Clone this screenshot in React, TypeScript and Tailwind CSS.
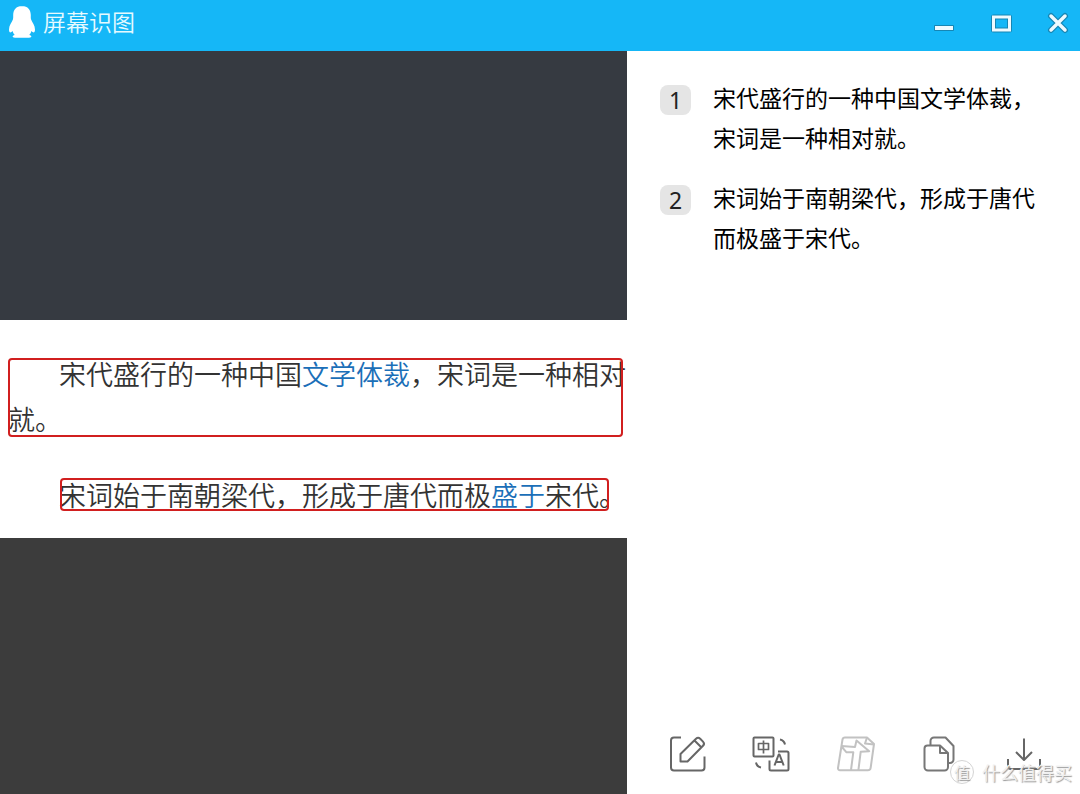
import React from "react";

const results = [
  { id: 1, lines: ["宋代盛行的一种中国文学体裁，", "宋词是一种相对就。"] },
  { id: 2, lines: ["宋词始于南朝梁代，形成于唐代", "而极盛于宋代。"] },
];

function PenguinLogo() {
  return (
    <svg viewBox="0 0 28 34" className="h-[34px] w-7 shrink-0" fill="#fff" aria-hidden="true">
      <path d="M14 1c-6 0-8.800 4.200-8.800 9 0 2 .1 3.200-.3 4.600C3.800 17.400 1 20.400 1 24.500c0 2 .6 2.900 1.300 2.900.8 0 1.600-.6 2.300-1.400.3 1.500 1.100 2.900 2.100 3.900-1.400.4-2.100 1-2.100 1.700 0 .9 1.600 1.200 4.300 1.200h10.200c2.700 0 4.300-.3 4.300-1.200 0-.7-.7-1.300-2.100-1.700 1-1 1.800-2.400 2.100-3.900.7.8 1.500 1.400 2.300 1.400.7 0 1.300-.9 1.300-2.900 0-4.100-2.800-7.100-3.900-9.900-.4-1.400-.3-2.600-.3-4.600 0-4.800-2.800-9-8.800-9z" />
    </svg>
  );
}

function WindowControls() {
  return (
    <div className="flex items-center gap-[33px]">
      <button type="button" aria-label="最小化" className="block">
        <svg viewBox="0 0 24 24" className="size-6" aria-hidden="true">
          <rect x="2" y="14" width="20" height="6" rx="1" fill="#1686b4" />
          <rect x="3" y="15" width="18" height="4" fill="#eefaff" />
        </svg>
      </button>
      <button type="button" aria-label="最大化" className="block">
        <svg viewBox="0 0 24 24" className="size-6" fill="none" aria-hidden="true">
          <rect x="4.500" y="6" width="16" height="13" stroke="#1686b4" strokeWidth="5" strokeLinejoin="round" />
          <rect x="4.500" y="6" width="16" height="13" stroke="#eefaff" strokeWidth="3" />
        </svg>
      </button>
      <button type="button" aria-label="关闭" className="block">
        <svg viewBox="0 0 24 24" className="size-6" fill="none" strokeLinecap="round" aria-hidden="true">
          <path d="M5 5l14 14M19 5l-14 14" stroke="#1686b4" strokeWidth="6" />
          <path d="M5 5l14 14M19 5l-14 14" stroke="#eefaff" strokeWidth="3.500" />
        </svg>
      </button>
    </div>
  );
}

const iconProps = {
  viewBox: "0 0 40 40",
  className: "size-10",
  fill: "none",
  strokeWidth: 2,
  strokeLinejoin: "round" as const,
  "aria-hidden": true,
};

function EditIcon() {
  return (
    <svg {...iconProps} stroke="#666">
      <path d="M14 3.500H7a3 3 0 0 0-3 3v27a3 3 0 0 0 3 3h27.500a3 3 0 0 0 3-3V22.500" />
      <path d="M13.500 27.500v-7.500L29 4.800a3 3 0 0 1 4.200 0l2.800 2.800a3 3 0 0 1 0 4.200L20.500 27.500zM27.500 6.500l7 7" />
    </svg>
  );
}

function TranslateIcon() {
  return (
    <svg {...iconProps} stroke="#666">
      <rect x="2.500" y="3.500" width="20" height="19" rx="1" />
      <path d="M7.500 9.500h10v6h-10zM12.500 6.500v13" strokeWidth="1.700" />
      <path d="M27 17.500h9a1.500 1.500 0 0 1 1.500 1.500v16a1.500 1.500 0 0 1-1.500 1.500H20a1.500 1.500 0 0 1-1.500-1.500v-8.500" />
      <path d="M23.500 31.500l4.200-11h.8l4.200 11M25 28h6.500M29 5.500c2.500.5 4.500 2.500 5 5M5 28.500c.5 2.500 2.300 4.500 5 5" />
    </svg>
  );
}

function MapIcon() {
  return (
    <svg {...iconProps} stroke="#c2c2c2">
      <path d="M9 3.500h22l7 6.500-3.300 23.500a3 3 0 0 1-3 2.800H4a2 2 0 0 1-2-2.300L6.500 5.500a2.500 2.500 0 0 1 2.500-2z" />
      <path d="M31 3.500l-2 6 9 1M5.500 12l13.500 1 1.500-6.500 12.700 10.700-8.500.5-2.300 18.500M5.500 12.500l5 5.800h6.800L15 36" />
    </svg>
  );
}

function CopyIcon() {
  return (
    <svg {...iconProps} stroke="#777">
      <path d="M10.500 11V7a3.500 3.500 0 0 1 3.500-3.500h11.500L33.500 12v13.500a3.500 3.500 0 0 1-3.500 3.500h-2" />
      <path d="M20 11.500H7.500a3 3 0 0 0-3 3V33a3.500 3.500 0 0 0 3.500 3.500h16.500a3.500 3.500 0 0 0 3.500-3.500V19zM20 11.500V19h8" />
    </svg>
  );
}

function DownloadIcon() {
  return (
    <svg {...iconProps} stroke="#666">
      <path d="M20 4.500v21.500M12 18l8 8 8-8M4 25v7a3 3 0 0 0 3 3h26a3 3 0 0 0 3-3v-7" />
    </svg>
  );
}

const tools = [
  { label: "编辑", Icon: EditIcon },
  { label: "翻译", Icon: TranslateIcon },
  { label: "转换", Icon: MapIcon },
  { label: "复制", Icon: CopyIcon },
  { label: "下载", Icon: DownloadIcon },
];

function Capture() {
  return (
    <section className="flex flex-col bg-[#3c3c3c]">
      <div className="h-[269px] bg-[#363a41]" />
      <div className="h-[218px] bg-white text-[27px] font-[350] whitespace-nowrap text-[#333]">
        <div className="relative pt-[31px] pl-2 leading-[45px]">
          <p className="pl-[51px]">
            宋代盛行的一种中国
            <a href="#genre" className="text-[#1b6fb8]">文学体裁</a>
            ，宋词是一种相对
          </p>
          <p>就。</p>
          <div className="pointer-events-none absolute top-[38px] right-1 left-2 h-[79px] rounded border-2 border-[#d11f1f]" />
        </div>
        <div className="relative mt-9 pl-[59px] leading-[35px]">
          <p>
            宋词始于南朝梁代，形成于唐代而极
            <a href="#flourish" className="text-[#1b6fb8]">盛于</a>
            宋代。
          </p>
          <div className="pointer-events-none absolute top-px right-[18px] left-[60px] h-[33px] rounded border-2 border-[#d11f1f]" />
        </div>
      </div>
    </section>
  );
}

export default function App() {
  return (
    <div className="flex min-h-screen flex-col bg-white font-['Noto_Sans_CJK_SC',sans-serif]">
      <header className="flex h-[51px] items-start justify-between bg-[#15b7f7] pt-[5px] pr-[10px] pl-2">
        <div className="flex items-start gap-[7px]">
          <PenguinLogo />
          <h1 className="text-[23px] leading-8 font-[350] text-[#e6faff]">屏幕识图</h1>
        </div>
        <div className="pt-[6px]">
          <WindowControls />
        </div>
      </header>
      <main className="grid flex-1 grid-cols-[627fr_453fr]">
        <Capture />
        <section className="relative flex flex-col justify-between">
          <ol className="flex flex-col gap-5 pt-[26px] pl-[33px]">
            {results.map((r) => (
              <li key={r.id} className="flex gap-[22px]">
                <span className="mt-2 flex h-[30px] w-[31px] shrink-0 items-center justify-center rounded-lg bg-[#e5e5e5] font-['Noto_Sans'] text-[23px] text-[#222]">
                  {r.id}
                </span>
                <p className="text-[23px] leading-10 whitespace-nowrap text-black">
                  {r.lines.map((line) => (
                    <span key={line} className="block">{line}</span>
                  ))}
                </p>
              </li>
            ))}
          </ol>
          <div className="flex justify-between pr-9 pb-5 pl-10">
            {tools.map(({ label, Icon }) => (
              <button key={label} type="button" aria-label={label} className="block">
                <Icon />
              </button>
            ))}
          </div>
          <div className="absolute right-2 bottom-2 flex items-center gap-2 text-[#f0f0f0] [text-shadow:1px_1px_1px_#999]">
            <span className="flex size-6 items-center justify-center rounded-full border border-[#d4d4d4] bg-white text-base">值</span>
            <span className="text-[18px] leading-7">什么值得买</span>
          </div>
        </section>
      </main>
    </div>
  );
}
